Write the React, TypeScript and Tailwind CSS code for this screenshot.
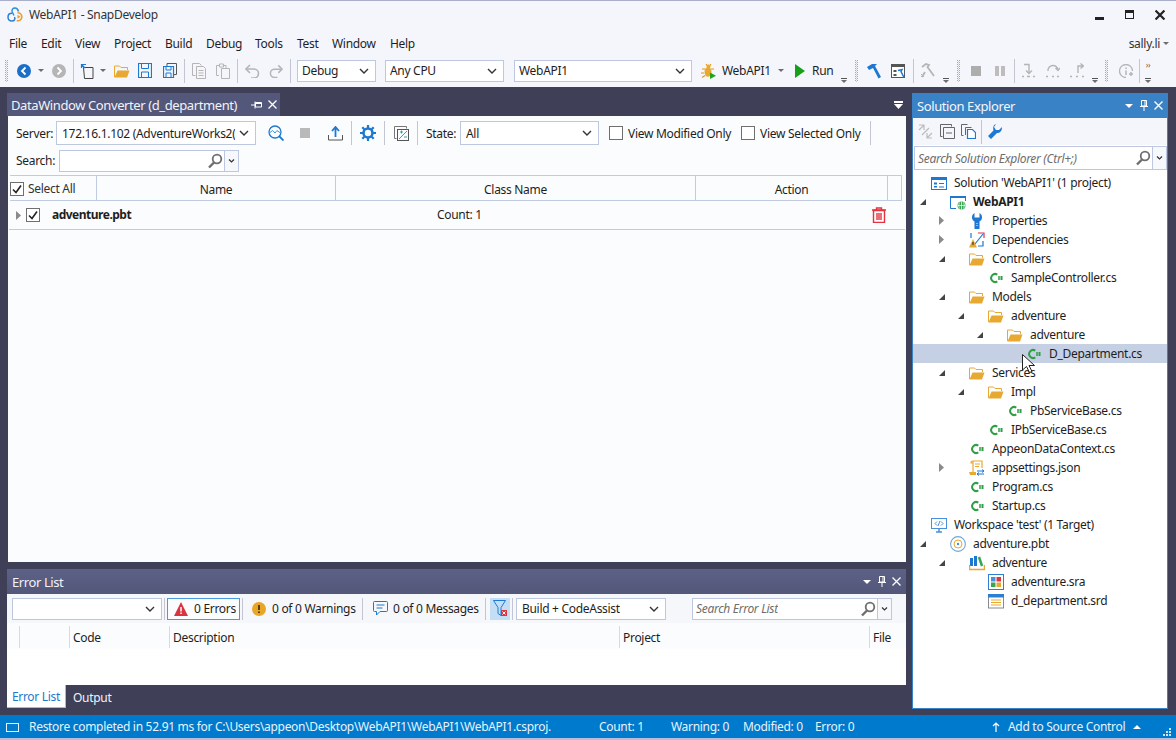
import type { ReactNode } from "react";

type IconProps = { className?: string };

const font = "font-['Noto_Sans',sans-serif]";

function Svg({ className = "", children, box = "0 0 16 16" }: { className?: string; children: ReactNode; box?: string }) {
  return (
    <svg viewBox={box} className={`shrink-0 ${className}`} fill="none">
      {children}
    </svg>
  );
}

function Logo({ className }: IconProps) {
  return (
    <Svg className={className} box="0 0 17 15">
      <path d="M11.500 4.500C11 2.500 9.800 1 8 1 5.800 1 4.500 2.800 5.200 5L7 8.500" stroke="#2f8fd8" strokeWidth="1.500" />
      <path d="M5 6.300C2.500 6.300 1 8 1 10c0 2.300 1.700 4 4 4 2.500 0 3.500-2 2.500-4" stroke="#2f7fd0" strokeWidth="1.500" />
      <path d="M10.500 5.800a4 4 0 1 1 -.8 7.800" stroke="#ef9a2a" strokeWidth="1.500" />
      <path d="M10.500 7.800l3 2-3 2z" fill="#ef9a2a" />
    </Svg>
  );
}

function Dots() {
  return (
    <Svg className="h-[22px] w-[3px]" box="0 0 3 22">
      <pattern id="grip" width="2" height="2" patternUnits="userSpaceOnUse">
        <rect width="1" height="1" fill="#a5a8bb" />
        <rect x="1" y="1" width="1" height="1" fill="#c9cbd8" />
      </pattern>
      <rect width="3" height="22" fill="url(#grip)" />
    </Svg>
  );
}

function Sep() {
  return <div className="h-[24px] w-px bg-[#c3c6d2]" />;
}

function Tri({ className = "" }: IconProps) {
  return (
    <Svg className={`h-[3px] w-[6px] ${className}`} box="0 0 6 3">
      <path d="M0 0h6L3 3z" fill="#6d6d6d" />
    </Svg>
  );
}

function Overflow({ className = "", dots = false }: { className?: string; dots?: boolean }) {
  return (
    <div className={`flex h-[24px] w-[6px] flex-col items-center justify-end ${className}`}>
      {dots && <span className="mb-auto mt-[2px] text-[8px] leading-[8px] text-[#555]">››</span>}
      <div className="mb-[1px] h-px w-[6px] bg-[#555]" />
      <Tri />
    </div>
  );
}

function Chevron({ className = "" }: IconProps) {
  return (
    <Svg className={`h-[6px] w-[10px] ${className}`} box="0 0 10 6">
      <path d="M1 1l4 4 4-4" stroke="#333" strokeWidth="1.400" />
    </Svg>
  );
}

function Combo({ value, className = "" }: { value: string; className?: string }) {
  return (
    <div className={`flex h-[22px] shrink-0 items-center justify-between border border-[#bdc8e0] bg-white pr-[6px] text-[#1e1e1e] ${className}`}>
      <span className="overflow-hidden whitespace-nowrap pt-[1px]">{value}</span>
      <Chevron className="ml-[4px]" />
    </div>
  );
}

function Check({ checked = false, className = "" }: { checked?: boolean; className?: string }) {
  return (
    <div className={`flex h-[14px] w-[14px] shrink-0 items-center justify-center border border-[#6f6f6f] bg-white ${className}`}>
      {checked && (
        <Svg className="h-[12px] w-[12px]" box="0 0 12 12">
          <path d="M2 6.500l3 3 5-7" stroke="#222" strokeWidth="1.600" />
        </Svg>
      )}
    </div>
  );
}

function Lens({ className = "" }: IconProps) {
  return (
    <Svg className={`h-[16px] w-[16px] ${className}`}>
      <circle cx="10" cy="6" r="4.300" stroke="#6f6f6f" strokeWidth="1.800" />
      <path d="M7 9.500L2 14.500" stroke="#6f6f6f" strokeWidth="2.400" />
    </Svg>
  );
}

function SearchBox({ placeholder, width, dd }: { placeholder?: string; width: string; dd: string }) {
  return (
    <div className="flex shrink-0">
      <div className={`flex h-[22px] items-center justify-between border border-[#bdc8e0] bg-white pl-[3px] pr-[1px] ${width}`}>
        <span className="overflow-hidden whitespace-nowrap pt-[1px] italic text-[#6d6d6d]">{placeholder}</span>
        <Lens />
      </div>
      <div className={`flex h-[22px] items-center justify-center border border-l-0 border-[#bdc8e0] bg-[#f7f8fc] ${dd}`}>
        <Svg className="h-[4px] w-[7px]" box="0 0 7 4">
          <path d="M1 .5l2.500 2.500L6 .5" stroke="#333" strokeWidth="1.200" />
        </Svg>
      </div>
    </div>
  );
}

function Close({ className = "" }: IconProps) {
  return (
    <Svg className={`h-[9px] w-[9px] ${className}`} box="0 0 9 9">
      <path d="M.5.5l8 8M8.500.5l-8 8" stroke="#fff" strokeWidth="1.300" />
    </Svg>
  );
}

function PinV({ className = "" }: IconProps) {
  return (
    <Svg className={`h-[11px] w-[8px] ${className}`} box="0 0 8 11">
      <path d="M1.500.5h5v5.500h-5zM0 6.500h8M4 6.500V11M5 1v5" stroke="#fff" strokeWidth="1" />
    </Svg>
  );
}

function PaneButtons() {
  return (
    <div className="flex items-center">
      <Svg className="h-[4px] w-[8px]" box="0 0 8 4">
        <path d="M0 0h8L4 4z" fill="#fff" />
      </Svg>
      <PinV className="ml-[7px]" />
      <Close className="ml-[6px]" />
    </div>
  );
}

function Folder({ className = "h-[16px] w-[16px]" }: IconProps) {
  return (
    <Svg className={className}>
      <path d="M.5 14V3h5l1.500 1.500h6.500V7" stroke="#e8a933" strokeWidth="1" />
      <path d="M.5 14.500L3.500 7.500h12l-2.500 7z" fill="#e8a933" />
    </Svg>
  );
}

function CSharp() {
  return (
    <Svg className="h-[12px] w-[14px]" box="0 0 14 12">
      <path d="M8.300 2.600A4 4 0 1 0 8.300 9.400" stroke="#2f9e44" strokeWidth="2" />
      <path d="M10 4v4M12.500 4v4M9 5h5M9 7h5" stroke="#2f9e44" strokeWidth="1" />
    </Svg>
  );
}

function SolutionIcon() {
  return (
    <Svg>
      <rect x=".5" y="2.500" width="15" height="12" stroke="#1c78d0" />
      <path d="M0 3h16v2H0z" fill="#1c78d0" />
      <path d="M3 7.500h3v2H3zM3 11h3v1.500H3z" fill="#1c78d0" />
      <path d="M8 8.500h5M8 12h5" stroke="#1c78d0" />
    </Svg>
  );
}

function ProjectIcon() {
  return (
    <Svg>
      <path d="M6 14.500H.5v-12h15V7" stroke="#1c78d0" />
      <path d="M0 2h16v2H0z" fill="#1c78d0" />
      <circle cx="11.500" cy="11.500" r="4" fill="#3aa655" />
      <path d="M7.500 11.500h8M11.500 7.500v8M9.500 8.500c-1 2-1 4 0 6M13.500 8.500c1 2 1 4 0 6" stroke="#fff" strokeWidth=".7" />
    </Svg>
  );
}

function WrenchBlue() {
  return (
    <Svg>
      <path d="M5.500 0v4.500h5V0C12.500 1 13 3 13 4.500c0 2-1 3.300-2.500 4V16h-5V8.500C4 7.800 3 6.500 3 4.500 3 3 3.500 1 5.500 0z" fill="#1c78d0" />
      <path d="M8 10v4" stroke="#fff" strokeDasharray="1 1" />
    </Svg>
  );
}

function DepsIcon() {
  return (
    <Svg>
      <path d="M9 1h6v5" stroke="#e03344" strokeWidth="1.200" />
      <path d="M2 1v5M6 12l8-10" stroke="#1c78d0" strokeWidth="1.200" />
      <path d="M9 14h5V9" stroke="#1c78d0" strokeWidth="1.200" />
      <path d="M4 7l4 8.500H0z" fill="#e8a933" />
      <path d="M4 10v3" stroke="#222" />
    </Svg>
  );
}

function JsonIcon() {
  return (
    <Svg>
      <path d="M4 1h9v7M4 1c-1.500 0-2 1-2 2h2M4 1v11" stroke="#e8a933" strokeWidth="1.200" />
      <path d="M6 4h5M6 6.500h4" stroke="#e8a933" />
      <path d="M0 12h7v3H1z" fill="#e8a933" />
      <path d="M8 11h7M8 14h7M13 9.500l2 1.500-2 1.500M10 12.500L8 14l2 1.500" stroke="#1c78d0" />
    </Svg>
  );
}

function WorkspaceIcon() {
  return (
    <Svg>
      <rect x=".5" y="1.500" width="15" height="10" stroke="#4a90d9" />
      <path d="M5 15h6M8 12v3" stroke="#4a90d9" strokeWidth="1.500" />
      <path d="M6 4.500L4 6.500l2 2M10 4.500l2 2-2 2" stroke="#4a90d9" />
      <path d="M9 4L7 9" stroke="#4a90d9" />
    </Svg>
  );
}

function PbtIcon() {
  return (
    <Svg>
      <circle cx="8" cy="8" r="7.400" stroke="#6ea8dc" strokeWidth="1.100" />
      <circle cx="8" cy="8" r="4" stroke="#e8a933" />
      <circle cx="8" cy="8" r="1.200" fill="#4a90d9" />
    </Svg>
  );
}

function LibIcon() {
  return (
    <Svg>
      <path d="M1 3h3v8H1zM5 1h3v10H5z" fill="#1c78d0" />
      <path d="M10 2l3 9" stroke="#3aa655" strokeWidth="2.500" />
      <path d="M.5 10v4.500h15V10" stroke="#e8a933" strokeWidth="1.500" />
    </Svg>
  );
}

function SraIcon() {
  return (
    <Svg>
      <rect x=".5" y=".5" width="15" height="15" stroke="#2f7fd0" />
      <path d="M3 3h4.500v4.500H3z" fill="#4a90d9" />
      <path d="M8.500 3H13v4.500H8.500z" fill="#e03344" />
      <path d="M3 8.500h4.500V13H3z" fill="#3aa655" />
      <path d="M8.500 8.500H13V13H8.500z" fill="#e8a933" />
    </Svg>
  );
}

function SrdIcon() {
  return (
    <Svg>
      <rect x=".5" y="1.500" width="15" height="13.500" stroke="#8a8a8a" fill="#fff" />
      <path d="M0 1h16v3.500H0z" fill="#2f7fd0" />
      <path d="M3 7h10M3 9.500h10M3 12h10" stroke="#e8a933" />
    </Svg>
  );
}

type Row = {
  level: number;
  text: string;
  icon: ReactNode;
  arrow?: "open" | "closed";
  bold?: boolean;
  selected?: boolean;
};

const tree: Row[] = [
  { level: 0, text: "Solution 'WebAPI1' (1 project)", icon: <SolutionIcon /> },
  { level: 1, text: "WebAPI1", icon: <ProjectIcon />, arrow: "open", bold: true },
  { level: 2, text: "Properties", icon: <WrenchBlue />, arrow: "closed" },
  { level: 2, text: "Dependencies", icon: <DepsIcon />, arrow: "closed" },
  { level: 2, text: "Controllers", icon: <Folder />, arrow: "open" },
  { level: 3, text: "SampleController.cs", icon: <CSharp /> },
  { level: 2, text: "Models", icon: <Folder />, arrow: "open" },
  { level: 3, text: "adventure", icon: <Folder />, arrow: "open" },
  { level: 4, text: "adventure", icon: <Folder />, arrow: "open" },
  { level: 5, text: "D_Department.cs", icon: <CSharp />, selected: true },
  { level: 2, text: "Services", icon: <Folder />, arrow: "open" },
  { level: 3, text: "Impl", icon: <Folder />, arrow: "open" },
  { level: 4, text: "PbServiceBase.cs", icon: <CSharp /> },
  { level: 3, text: "IPbServiceBase.cs", icon: <CSharp /> },
  { level: 2, text: "AppeonDataContext.cs", icon: <CSharp /> },
  { level: 2, text: "appsettings.json", icon: <JsonIcon />, arrow: "closed" },
  { level: 2, text: "Program.cs", icon: <CSharp /> },
  { level: 2, text: "Startup.cs", icon: <CSharp /> },
  { level: 0, text: "Workspace 'test' (1 Target)", icon: <WorkspaceIcon /> },
  { level: 1, text: "adventure.pbt", icon: <PbtIcon />, arrow: "open" },
  { level: 2, text: "adventure", icon: <LibIcon />, arrow: "open" },
  { level: 3, text: "adventure.sra", icon: <SraIcon /> },
  { level: 3, text: "d_department.srd", icon: <SrdIcon /> },
];

function TreeRow({ row }: { row: Row }) {
  return (
    <div className={`flex h-[19px] items-center whitespace-nowrap ${row.selected ? "bg-[#c5d0e5]" : ""} ${row.bold ? "font-bold" : ""}`}>
      {row.level === 0 ? (
        <div className="w-[18px] shrink-0" />
      ) : (
        <>
          <div className="shrink-0" style={{ width: row.level * 19 - 12 }} />
          <div className="flex w-[30px] shrink-0 items-center">
            {row.arrow === "open" && (
              <Svg className="h-[6px] w-[6px]" box="0 0 6 6">
                <path d="M6 0v6H0z" fill="#444" />
              </Svg>
            )}
            {row.arrow === "closed" && (
              <Svg className="h-[9px] w-[5px]" box="0 0 5 9">
                <path d="M0 0l5 4.500L0 9z" fill="#8a8a8a" />
              </Svg>
            )}
          </div>
        </>
      )}
      <div className="flex h-[16px] w-[16px] shrink-0 items-center justify-center">{row.icon}</div>
      <span className="ml-[7px]">{row.text}</span>
    </div>
  );
}

const menu = [
  { t: "File", w: "w-[32px]" },
  { t: "Edit", w: "w-[34px]" },
  { t: "View", w: "w-[39px]" },
  { t: "Project", w: "w-[51px]" },
  { t: "Build", w: "w-[41px]" },
  { t: "Debug", w: "w-[49px]" },
  { t: "Tools", w: "w-[42px]" },
  { t: "Test", w: "w-[35px]" },
  { t: "Window", w: "w-[58px]" },
  { t: "Help", w: "w-[40px]" },
];

function MainToolbar() {
  return (
    <div className="flex h-[34px] shrink-0 items-center pl-[5px] pt-[1px]">
      <Dots />
      <Svg className="ml-[9px] h-[14px] w-[14px]" box="0 0 14 14">
        <circle cx="7" cy="7" r="7" fill="#1b6fc9" />
        <path d="M8.500 3.500L5 7l3.500 3.500" stroke="#fff" strokeWidth="1.800" />
      </Svg>
      <Tri className="ml-[7px]" />
      <Svg className="ml-[8px] h-[14px] w-[14px]" box="0 0 14 14">
        <circle cx="7" cy="7" r="7" fill="#b5b5b5" />
        <path d="M5.500 3.500L9 7l-3.500 3.500" stroke="#fff" strokeWidth="1.800" />
      </Svg>
      <div className="ml-[7px]"><Sep /></div>
      <Svg className="ml-[6px] h-[16px] w-[14px]" box="0 0 14 16">
        <path d="M3.500 4.500h9.500v11H4.500z" stroke="#444" />
        <path d="M6 1.500H1.500V5M1.500 1.500l3.500 3.500" stroke="#1c78d0" strokeWidth="1.200" />
      </Svg>
      <Tri className="ml-[6px]" />
      <Folder className="ml-[8px] h-[16px] w-[16px]" />
      <Svg className="ml-[8px] h-[15px] w-[14px]" box="0 0 14 15">
        <path d="M.5.500h13v14H.5z" stroke="#1c78d0" strokeWidth="1.200" />
        <path d="M3.500 1v4.500h7V1M3.500 14V9h7v5" stroke="#1c78d0" />
      </Svg>
      <Svg className="ml-[11px] h-[15px] w-[14px]" box="0 0 14 15">
        <path d="M4 3V.500h9.500v11H11" stroke="#555" />
        <path d="M.5 3.500h10v11H.5z" stroke="#1c78d0" strokeWidth="1.200" />
        <path d="M3 4v3h5V4M3 14v-4h5v4" stroke="#1c78d0" />
      </Svg>
      <div className="ml-[7px]"><Sep /></div>
      <Svg className="ml-[7px] h-[16px] w-[14px]" box="0 0 14 16">
        <path d="M3.500 12.500H.5V.500h7l2 2" stroke="#b5b5b5" />
        <path d="M4.500 3.500h7l2 2v10h-9zM6.500 7.500h5M6.500 10h5M6.500 12.500h5" stroke="#b5b5b5" />
      </Svg>
      <Svg className="ml-[10px] h-[16px] w-[14px]" box="0 0 14 16">
        <path d="M3 12.500H.5v-10H3M8 2.500h2V5" stroke="#b5b5b5" />
        <path d="M3.500 1h4v3h-4zM5.500 5.500h8v10h-8z" stroke="#b5b5b5" />
      </Svg>
      <div className="ml-[7px]"><Sep /></div>
      <Svg className="ml-[7px] h-[14px] w-[15px]" box="0 0 15 14">
        <path d="M5 1L1 5l4 4" stroke="#b5b5b5" strokeWidth="1.600" />
        <path d="M1.500 5H9a4.500 4.500 0 0 1 0 9H6" stroke="#b5b5b5" strokeWidth="1.600" />
      </Svg>
      <Svg className="ml-[9px] h-[14px] w-[14px]" box="0 0 15 14">
        <path d="M10 1l4 4-4 4" stroke="#b5b5b5" strokeWidth="1.600" />
        <path d="M13.500 5H6a4.500 4.500 0 0 0 0 9h3" stroke="#b5b5b5" strokeWidth="1.600" />
      </Svg>
      <div className="ml-[7px]"><Sep /></div>
      <Combo value="Debug" className="ml-[6px] w-[79px] pl-[4px]" />
      <Combo value="Any CPU" className="ml-[9px] w-[119px] pl-[4px]" />
      <Combo value="WebAPI1" className="ml-[10px] w-[178px] pl-[4px]" />
      <Svg className="ml-[9px] h-[16px] w-[15px]" box="0 0 15 16">
        <path d="M5 1l1.500 2M10 1L8.500 3M1 6h3M0 10h3M1 14.500l3-2M10 6h3" stroke="#d99a1c" strokeWidth="1.200" />
        <circle cx="7.500" cy="3.500" r="2" fill="#eaa92c" />
        <ellipse cx="7" cy="9" rx="3.500" ry="4.800" fill="#eaa92c" />
        <path d="M9 9.500l6 3.200L9 16z" fill="#1ea51e" />
      </Svg>
      <span className="ml-[6px] w-[49px] whitespace-nowrap pt-[1px]">WebAPI1</span>
      <Tri className="ml-[7px]" />
      <Svg className="ml-[11px] h-[14px] w-[10px]" box="0 0 10 14">
        <path d="M0 0l10 7L0 14z" fill="#16a016" />
      </Svg>
      <span className="ml-[7px] w-[20px] whitespace-nowrap pt-[1px]">Run</span>
      <Overflow className="ml-[9px]" />
      <div className="ml-[8px]"><Dots /></div>
      <Svg className="ml-[9px] h-[16px] w-[14px]" box="0 0 14 16">
        <path d="M0 4l5-3h5L8 3l6 11-2.500 1.500L6 5 2 7z" fill="#1c78d0" />
      </Svg>
      <Svg className="ml-[10px] h-[14px] w-[14px]" box="0 0 14 14">
        <rect x=".5" y=".5" width="13" height="13" stroke="#555" fill="#fff" />
        <path d="M0 0h14v3H0zM2.500 6h3v2h-3zM2.500 10h3v2h-3z" fill="#555" />
        <path d="M7 6.500l4-1-1 2 3 6" stroke="#1c78d0" strokeWidth="1.500" />
      </Svg>
      <div className="ml-[8px]"><Sep /></div>
      <Svg className="ml-[6px] h-[15px] w-[15px]" box="0 0 15 15">
        <path d="M2 4l4-3 3 1-1.500 2L14 13M5 9l-3 5" stroke="#b5b5b5" strokeWidth="1.800" />
        <path d="M1 11l3 3M4 11l-3 3" stroke="#b5b5b5" />
      </Svg>
      <Overflow className="ml-[8px]" />
      <div className="ml-[8px]"><Dots /></div>
      <div className="ml-[11px] h-[10px] w-[10px] bg-[#adadad]" />
      <div className="ml-[14px] flex h-[10px] w-[10px] justify-between">
        <div className="w-[4px] bg-[#bdbdbd]" />
        <div className="w-[4px] bg-[#bdbdbd]" />
      </div>
      <div className="ml-[9px]"><Sep /></div>
      <Svg className="ml-[6px] h-[15px] w-[15px]" box="0 0 15 15">
        <path d="M3 1.500h5v8.500M5 7.500l3 3 3-3M1 13.500h2M6 13.500h3M12 13.500h2" stroke="#b5b5b5" strokeWidth="1.400" />
      </Svg>
      <Svg className="ml-[10px] h-[15px] w-[14px]" box="0 0 14 15">
        <path d="M2 8a5 5 0 0 1 10-1M9.500 5l2.500 2.500L14 5M0 13.500h2M6 13.500h2M11 13.500h2" stroke="#b5b5b5" strokeWidth="1.400" />
      </Svg>
      <Svg className="ml-[10px] h-[15px] w-[14px]" box="0 0 14 15">
        <path d="M8 10V3h5M10.500.500L13.500 3l-3 2.500M0 13.500h2M6 13.500h2M12 13.500h2" stroke="#b5b5b5" strokeWidth="1.400" />
      </Svg>
      <Overflow className="ml-[8px]" />
      <div className="ml-[7px]"><Dots /></div>
      <Svg className="ml-[11px] h-[14px] w-[14px]" box="0 0 14 14">
        <path d="M7 13.500A6.500 6.500 0 1 1 13.500 7" stroke="#b5b5b5" strokeWidth="1.300" />
        <path d="M7 3.500v1.500M7 6.500V11M10 10h4M12 8v4" stroke="#b5b5b5" strokeWidth="1.500" />
      </Svg>
      <div className="ml-[6px]"><Sep /></div>
      <Overflow className="ml-[5px]" dots />
    </div>
  );
}

function DocTools() {
  return (
    <div className="h-[59px] shrink-0 px-[8px] pt-[5px]">
      <div className="flex h-[24px] items-center">
        <span className="w-[40px] whitespace-nowrap pt-[1px]">Server:</span>
        <Combo value="172.16.1.102 (AdventureWorks2(" className="h-[24px] w-[200px] pl-[5px]" />
        <Svg className="ml-[12px] h-[16px] w-[16px]">
          <circle cx="7" cy="7" r="6" stroke="#1c78d0" strokeWidth="1.300" />
          <path d="M11 11l4.500 4.500" stroke="#1c78d0" strokeWidth="1.800" />
          <path d="M1.500 8l3-2.500L7 8l2-2.500L12.500 8" stroke="#3a9bdc" />
        </Svg>
        <div className="ml-[16px] h-[10px] w-[10px] bg-[#b9b9b9]" />
        <Svg className="ml-[18px] h-[15px] w-[15px]" box="0 0 15 15">
          <path d="M7.500 11V2M4 5l3.500-4L11 5" stroke="#1c78d0" strokeWidth="1.800" />
          <path d="M.5 9v5h14V9" stroke="#555" />
        </Svg>
        <div className="ml-[8px]"><Sep /></div>
        <Svg className="ml-[8px] h-[16px] w-[16px]">
          <circle cx="8" cy="8" r="4.500" stroke="#1c78d0" strokeWidth="2.600" />
          <path d="M8 0v3M8 13v3M0 8h3M13 8h3M2.300 2.300l2 2M11.700 11.700l2 2M2.300 13.700l2-2M11.700 4.300l2-2" stroke="#1c78d0" strokeWidth="2.200" />
        </Svg>
        <div className="ml-[8px]"><Sep /></div>
        <Svg className="ml-[9px] h-[15px] w-[15px]" box="0 0 15 15">
          <path d="M2.500 12.500h-2V.500h12v2" stroke="#777" />
          <rect x="3.500" y="3.500" width="11" height="11" stroke="#555" />
          <path d="M5 13l8-8M6 6h3M7.500 4.500v3M10 11h3" stroke="#3aa0a0" />
        </Svg>
        <div className="ml-[8px]"><Sep /></div>
        <span className="ml-[8px] w-[34px] whitespace-nowrap pt-[1px]">State:</span>
        <Combo value="All" className="h-[24px] w-[139px] pl-[5px]" />
        <Check className="ml-[10px]" />
        <span className="ml-[5px] w-[113px] whitespace-nowrap pt-[1px]">View Modified Only</span>
        <Check />
        <span className="ml-[5px] w-[110px] whitespace-nowrap pt-[1px]">View Selected Only</span>
        <Sep />
      </div>
      <div className="mt-[5px] flex h-[22px] items-center">
        <span className="w-[43px] whitespace-nowrap">Search:</span>
        <SearchBox width="w-[166px]" dd="w-[14px]" />
      </div>
    </div>
  );
}

function Grid() {
  return (
    <div className="ml-[2px] mr-[4px] flex h-[26px] shrink-0 items-center border-y border-[#c0cbe2] text-[#1e1e1e]">
      <div className="flex h-full w-[87px] items-center border-r border-[#c0cbe2] pt-[1px]">
        <Check checked />
        <span className="ml-[4px] whitespace-nowrap pt-[1px] text-[#333]">Select All</span>
      </div>
      <div className="flex h-full w-[239px] items-center justify-center border-r border-[#c0cbe2] pt-[3px]">Name</div>
      <div className="flex h-full w-[360px] items-center justify-center border-r border-[#c0cbe2] pt-[3px]">Class Name</div>
      <div className="flex h-full w-[192px] items-center justify-center border-r border-[#c0cbe2] pt-[3px]">Action</div>
      <div className="h-full flex-1 border-r border-[#c0cbe2]" />
    </div>
  );
}

function DocPanel() {
  return (
    <div className="ml-px flex min-h-0 flex-1 flex-col bg-[#fbfcfd]">
      <DocTools />
      <Grid />
      <div className="ml-[1px] mr-[1px] flex h-[29px] shrink-0 items-center border-b border-[#c0cbe2] pl-[7px]">
        <Svg className="h-[9px] w-[5px]" box="0 0 5 9">
          <path d="M0 0l5 4.500L0 9z" fill="#8a8a8a" />
        </Svg>
        <Check checked className="ml-[5px]" />
        <span className="ml-[12px] w-[385px] whitespace-nowrap font-bold tracking-[-0.5px]">adventure.pbt</span>
        <span className="whitespace-nowrap">Count: 1</span>
        <div className="flex-1" />
        <Svg className="mr-[18px] h-[16px] w-[16px]">
          <path d="M1 3h14M5.500 3V1h5v2" stroke="#e5323e" strokeWidth="1.400" />
          <path d="M2.500 3.500h11v12h-11zM6 6v7M8 6v7M10 6v7" stroke="#e5323e" strokeWidth="1.400" />
        </Svg>
      </div>
    </div>
  );
}

function ErrorList() {
  return (
    <div className="mt-[7px] flex h-[116px] shrink-0 flex-col">
      <div className="flex h-[25px] shrink-0 items-center justify-between bg-gradient-to-b from-[#5c6186] to-[#53577a] pl-[5px] pr-[5px] text-[13px] tracking-[-0.4px] text-[#f2f3f8]">
        <span>Error List</span>
        <PaneButtons />
      </div>
      <div className="flex h-[29px] shrink-0 items-center bg-[#f6f7fb] pl-[5px]">
        <Combo value="" className="w-[150px]" />
        <div className="ml-[2px] h-[22px] w-px bg-[#c3c6d2]" />
        <div className="ml-[2px] flex h-[22px] w-[73px] shrink-0 items-center border border-[#4a9ae0] bg-[#fbfcfe] pl-[6px]">
          <Svg className="h-[14px] w-[14px]" box="0 0 14 14">
            <path d="M7 0l7 14H0z" fill="#d9343f" />
            <path d="M7 5v4.500M7 10.500v1.500" stroke="#fff" strokeWidth="1.500" />
          </Svg>
          <span className="ml-[6px] whitespace-nowrap pt-[1px]">0 Errors</span>
        </div>
        <div className="ml-[2px] h-[22px] w-px bg-[#c3c6d2]" />
        <Svg className="ml-[9px] h-[14px] w-[14px]" box="0 0 14 14">
          <circle cx="7" cy="7" r="7" fill="#e8a526" />
          <path d="M7 3v5M7 9.500V11" stroke="#222" strokeWidth="1.500" />
        </Svg>
        <span className="ml-[6px] w-[85px] whitespace-nowrap pt-[1px]">0 of 0 Warnings</span>
        <div className="ml-[5px] h-[22px] w-px bg-[#c3c6d2]" />
        <Svg className="ml-[10px] h-[15px] w-[15px]" box="0 0 15 15">
          <path d="M1.500.500h12a1 1 0 0 1 1 1v8a1 1 0 0 1-1 1H7L3.500 14v-3.500h-2a1 1 0 0 1-1-1v-8a1 1 0 0 1 1-1z" stroke="#1c78d0" />
          <path d="M3.500 4h8M3.500 7h6" stroke="#1c78d0" />
        </Svg>
        <span className="ml-[5px] w-[85px] whitespace-nowrap pt-[1px]">0 of 0 Messages</span>
        <div className="ml-[7px] h-[22px] w-px bg-[#c3c6d2]" />
        <div className="ml-[4px] flex h-[22px] w-[20px] shrink-0 items-center justify-center bg-[#c4def5]">
          <Svg className="h-[17px] w-[14px]" box="0 0 14 17">
            <path d="M.5.500h12l-4.500 7v8l-3-2v-6z" stroke="#1c78d0" />
            <path d="M8 10h6v6H8z" fill="#d9343f" />
            <path d="M9.500 11.500l3 3M12.500 11.500l-3 3" stroke="#fff" />
          </Svg>
        </div>
        <div className="ml-[2px] h-[22px] w-px bg-[#c3c6d2]" />
        <Combo value="Build + CodeAssist" className="ml-[3px] w-[150px] pl-[5px]" />
        <div className="ml-[26px]">
          <SearchBox placeholder="Search Error List" width="w-[186px]" dd="w-[14px]" />
        </div>
      </div>
      <div className="flex h-[26px] shrink-0 items-center bg-[#fbfcfd] pl-[12px] pt-[2px] text-[#1e1e1e]">
        <div className="h-[22px] w-[50px] border-l border-[#d5dae8]" />
        <div className="flex h-[22px] w-[100px] items-center border-l border-[#d5dae8] pl-[3px] pt-[1px]">Code</div>
        <div className="flex h-[22px] w-[450px] items-center border-l border-[#d5dae8] pl-[3px] pt-[1px]">Description</div>
        <div className="flex h-[22px] w-[250px] items-center border-l border-[#d5dae8] pl-[3px] pt-[1px]">Project</div>
        <div className="flex h-[22px] w-[30px] items-center border-l border-[#d5dae8] pl-[3px] pt-[1px]">File</div>
      </div>
      <div className="flex-1 bg-white" />
    </div>
  );
}

export default function App() {
  return (
    <div className={`flex h-[740px] w-[1176px] flex-col overflow-hidden border-t border-[#a9aecb] bg-[#f5f6fc] text-xs leading-[16px] tracking-[-0.3px] text-[#1e1e1e] ${font}`}>
      <div className="flex h-[32px] shrink-0 items-center justify-between pb-[5px] pl-[7px] pr-[11px]">
        <div className="flex items-center">
          <Logo className="h-[15px] w-[17px]" />
          <span className="ml-[5px] text-[#333]">WebAPI1 - SnapDevelop</span>
        </div>
        <div className="flex items-center">
          <div className="mt-[7px] h-[3px] w-[9px] bg-[#222]" />
          <div className="ml-[21px] h-[9px] w-[9px] border border-t-[3px] border-[#222]" />
          <Close className="ml-[21px] h-[10px] w-[10px] [&_path]:stroke-[#222] [&_path]:stroke-2" />
        </div>
      </div>
      <div className="flex h-[20px] shrink-0 items-center justify-between pl-[9px] pr-[7px] pt-[1px]">
        <div className="flex">
          {menu.map((m) => (
            <span key={m.t} className={m.w}>
              {m.t}
            </span>
          ))}
        </div>
        <div className="flex items-center text-[#333]">
          sally.li
          <Tri className="ml-[3px]" />
        </div>
      </div>
      <MainToolbar />

      <div className="flex min-h-0 flex-1 bg-[#3f4058] pl-[7px]">
        <div className="flex w-[899px] shrink-0 flex-col pt-[6px]">
          <div className="flex h-[23px] shrink-0 items-center justify-between">
            <div className="flex h-[23px] w-[273px] items-center bg-[#53577a] pl-[4px] text-[13px] tracking-[-0.4px] text-[#f2f3f8]">
              <span className="w-[237px] whitespace-nowrap">DataWindow Converter (d_department)</span>
              <Svg className="ml-[3px] h-[8px] w-[11px]" box="0 0 11 8">
                <path d="M4.500 1.500h6v4.500h-6zM4 .5v7M0 4h4M5 2.500h5" stroke="#fff" />
              </Svg>
              <Close className="ml-[6px]" />
            </div>
            <div className="mr-[3px] flex flex-col items-center">
              <div className="h-[2px] w-[9px] bg-white" />
              <Svg className="mt-[1px] h-[5px] w-[9px]" box="0 0 9 5">
                <path d="M0 0h9L4.500 5z" fill="#fff" />
              </Svg>
            </div>
          </div>
          <DocPanel />
          <ErrorList />
          <div className="flex h-[30px] shrink-0 items-start">
            <div className="flex h-[23px] w-[59px] items-center justify-center border-b border-r border-[#aeb6d0] bg-white pt-[2px] text-[#1c78d0]">
              Error List
            </div>
            <span className="ml-[7px] mt-[5px] text-[#f2f3f8]">Output</span>
          </div>
        </div>

        <div className="mb-[6px] ml-[6px] mt-[6px] flex w-[256px] shrink-0 flex-col border border-t-0 border-[#3a82c6] bg-white">
          <div className="-mx-px flex h-[25px] shrink-0 items-center justify-between bg-[#3a82c6] pl-[5px] pr-[5px] text-[13px] tracking-[-0.4px] text-[#f2f6fb]">
            <span>Solution Explorer</span>
            <PaneButtons />
          </div>
          <div className="flex h-[27px] shrink-0 items-center bg-[#f5f6fb] pl-[5px]">
            <Svg className="h-[15px] w-[15px]" box="0 0 15 15">
              <path d="M1 6l5-5M1 1h5v5M14 9l-5 5M14 14H9V9M4 11l7-7" stroke="#bcbcbc" strokeWidth="1.200" />
            </Svg>
            <Svg className="ml-[7px] h-[15px] w-[15px]" box="0 0 15 15">
              <path d="M2.500 12.500h-2V.500h11v2" stroke="#666" />
              <path d="M3.500 3.500h11v11h-11zM6 9h6" stroke="#666" />
            </Svg>
            <Svg className="ml-[6px] h-[15px] w-[15px]" box="0 0 15 15">
              <path d="M2.500 11.500h-2V.500h6M4.500 11V3.500h6" stroke="#666" />
              <path d="M6.500 5.500h5l3 3v6h-8z" fill="#fff" stroke="#1c78d0" strokeWidth="1.200" />
            </Svg>
            <div className="ml-[5px]"><Sep /></div>
            <Svg className="ml-[5px] h-[15px] w-[15px]" box="0 0 15 15">
              <path d="M9 0l-2 3 2 3 3 0 3-3c0 4-2 6-5 6l-6 6-3-3 5.500-5.500C6 4 6 1 9 0z" fill="#1c78d0" />
            </Svg>
          </div>
          <div className="mt-px flex shrink-0 pl-[1px]">
            <SearchBox placeholder="Search Solution Explorer (Ctrl+;)" width="w-[239px] !h-[24px]" dd="w-[14px] !h-[24px]" />
          </div>
          <div className="relative flex-1 pt-[3px]">
            {tree.map((row, i) => (
              <TreeRow key={i} row={row} />
            ))}
            <Svg className="absolute left-[109px] top-[184px] h-[19px] w-[13px]" box="0 0 13 19">
              <path d="M.5.500v15.500l4-3.500 3 6 2.500-1-3-6h5.500z" fill="#fff" stroke="#222" />
            </Svg>
          </div>
        </div>
      </div>

      <div className="flex h-[23px] shrink-0 items-center bg-[#007acc] pl-[6px] pr-[5px] pt-[1px] text-[#e8f3fb]">
        <div className="h-[9px] w-[13px] border border-[#e8f3fb]" />
        <span className="ml-[10px] w-[570px] whitespace-nowrap">Restore completed in 52.91 ms for C:\Users\appeon\Desktop\WebAPI1\WebAPI1\WebAPI1.csproj.</span>
        <span className="w-[72px] whitespace-nowrap">Count: 1</span>
        <span className="w-[72px] whitespace-nowrap">Warning: 0</span>
        <span className="w-[72px] whitespace-nowrap">Modified: 0</span>
        <span className="w-[72px] whitespace-nowrap">Error: 0</span>
        <Svg className="ml-[105px] h-[10px] w-[8px]" box="0 0 8 10">
          <path d="M4 10V1M1 4l3-3 3 3" stroke="#fff" strokeWidth="1.200" />
        </Svg>
        <span className="ml-[8px] w-[118px] whitespace-nowrap">Add to Source Control</span>
        <Svg className="ml-[7px] h-[4px] w-[8px]" box="0 0 8 4">
          <path d="M0 4h8L4 0z" fill="#fff" />
        </Svg>
        <div className="flex-1" />
        <Svg className="mt-[10px] h-[9px] w-[11px]" box="0 0 11 9">
          <path d="M9 0h2v2H9zM6 3h2v2H6zM9 3h2v2H9zM3 6h2v2H3zM6 6h2v2H6zM9 6h2v2H9z" fill="#cde4f5" />
        </Svg>
      </div>
      <div className="h-[2px] shrink-0 bg-[#b8bcd6]" />
    </div>
  );
}
